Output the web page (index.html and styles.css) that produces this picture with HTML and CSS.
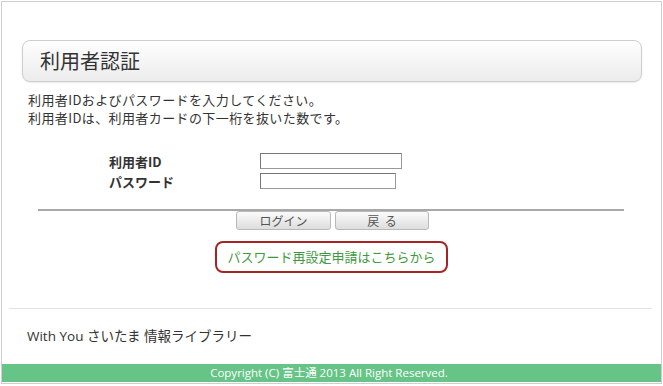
FILE: index.html
```html
<!DOCTYPE html>
<html lang="ja">
<head>
    <meta charset="UTF-8">
    <meta name="viewport" content="width=device-width, initial-scale=1.0">
    <title>利用者認証</title>
    <link rel="stylesheet" href="styles.css">
</head>
<body>
    <div class="page">
        <div class="heading">利用者認証</div>
        <div class="intro">
            <p>利用者IDおよびパスワードを入力してください。</p>
            <p>利用者IDは、利用者カードの下一桁を抜いた数です。</p>
        </div>
        <div class="login-form">
            <label for="userid">利用者ID</label>
            <input type="text" id="userid" class="field-id">
            <label for="password">パスワード</label>
            <input type="password" id="password" class="field-pw">
        </div>
        <hr class="rule">
        <div class="actions">
            <button class="btn btn-login">ログイン</button>
            <button class="btn btn-back">戻&nbsp;る</button>
        </div>
        <div class="reset-wrap">
            <a class="reset-link" href="#">パスワード再設定申請はこちらから</a>
        </div>
        <hr class="divider">
        <div class="site-name">With You さいたま 情報ライブラリー</div>
        <div class="footer">Copyright (C) 富士通 2013 All Right Reserved.</div>
    </div>
</body>
</html>
```

FILE: styles.css
```css
body {
    margin: 0;
    background-color: white;
    font-family: "Noto Sans CJK JP", "Open Sans", sans-serif;
    color: #333;
}

.page {
    margin: 1px;
    width: 661px;
    height: 383px;
    box-sizing: border-box;
    border: 1px solid #cfcfcf;
    display: flex;
    flex-direction: column;
}

.heading {
    margin: 38px 19px 0 20px;
    height: 40px;
    line-height: 40px;
    padding-left: 17px;
    font-size: 20px;
    border: 1px solid #cdcdcd;
    border-radius: 8px;
    background: linear-gradient(#fefefe, #ececec);
    box-shadow: 0 1px 2px rgba(0, 0, 0, 0.08);
}

.intro {
    margin-top: 9px;
    padding-left: 26px;
    font-size: 13px;
    line-height: 18px;
    letter-spacing: 0.4px;
}

.intro p {
    margin: 0;
}

.login-form {
    margin-top: 24px;
    padding-left: 107px;
    display: grid;
    grid-template-columns: 151px auto;
    grid-auto-rows: 20px;
    align-items: center;
    justify-items: start;
    font-size: 13px;
    font-weight: bold;
}

.login-form input {
    height: 16px;
    box-sizing: border-box;
    border: 1px solid #999;
    border-top-color: #777;
    border-left-color: #777;
    padding: 0 2px;
    margin: 0;
}

.field-id {
    width: 142px;
}

.field-pw {
    width: 136px;
}

.rule {
    margin: 18px 0 0 36px;
    width: 586px;
    height: 2px;
    border: none;
    background-color: #a8a8a8;
}

.actions {
    display: flex;
    justify-content: center;
    gap: 4px;
    margin-left: 2px;
}

.btn {
    height: 19px;
    padding: 0;
    font-family: inherit;
    font-size: 12px;
    color: #555;
    border: 1px solid #b9b9b9;
    border-radius: 3px;
    background: linear-gradient(#fbfbfb, #dddddd);
    line-height: 17px;
}

.btn-login {
    width: 95px;
}

.btn-back {
    width: 94px;
    word-spacing: 3px;
}

.reset-wrap {
    display: flex;
    justify-content: center;
    margin-top: 11px;
}

.reset-link {
    width: 233px;
    height: 32px;
    box-sizing: border-box;
    border: 2px solid #a82424;
    border-radius: 8px;
    text-align: center;
    line-height: 28px;
    font-size: 13px;
    color: #3f9a3f;
    text-decoration: none;
}

.divider {
    margin: 35px 0 0 7px;
    width: 643px;
    height: 1px;
    border: none;
    background-color: #e2e2e2;
}

.site-name {
    margin-top: 17px;
    padding-left: 25px;
    font-family: "Open Sans", "Noto Sans CJK JP", sans-serif;
    font-size: 13.5px;
    line-height: 20px;
}

.footer {
    margin-top: auto;
    margin-bottom: 1px;
    height: 18px;
    line-height: 18px;
    padding-right: 5px;
    background-color: #66c486;
    color: white;
    text-align: center;
    font-family: "Open Sans", "Noto Sans CJK JP", sans-serif;
    font-size: 11.5px;
}
```
